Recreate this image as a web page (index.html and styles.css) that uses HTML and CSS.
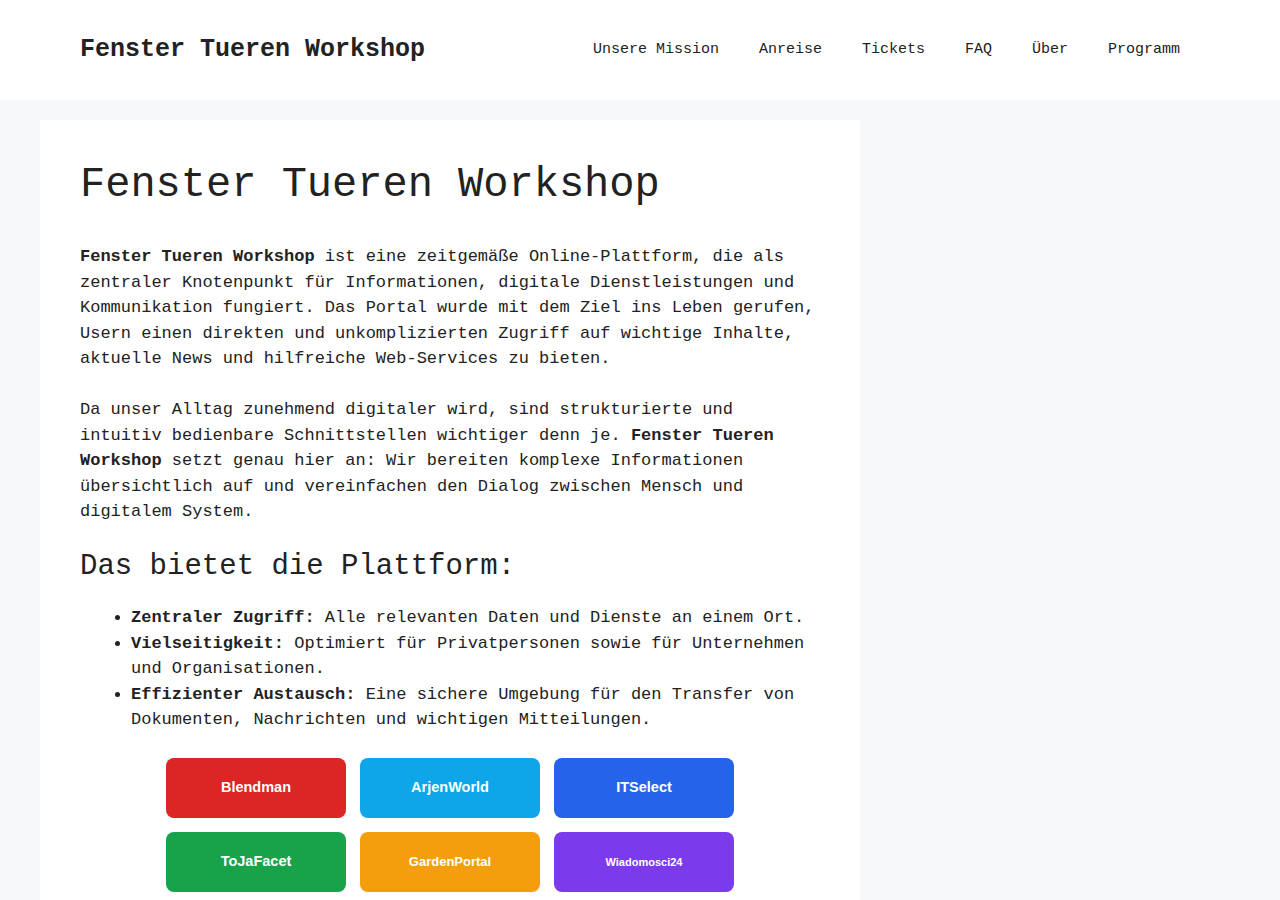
FILE: index.html
```html
<!DOCTYPE html>
<html lang="de">
<head>
<meta charset="utf-8">
<title>Fenster Tueren Workshop</title>
<link rel="stylesheet" href="styles.css">
</head>
<body>
<header class="site-header">
  <div class="header-inner">
    <a class="site-title" href="#">Fenster Tueren Workshop</a>
    <nav class="main-nav">
      <a href="#">Unsere Mission</a>
      <a href="#">Anreise</a>
      <a href="#">Tickets</a>
      <a href="#">FAQ</a>
      <a href="#">Über</a>
      <a href="#">Programm</a>
    </nav>
  </div>
</header>
<div class="site-content">
  <main class="content-area">
    <article class="entry">
      <h1 class="entry-title">Fenster Tueren Workshop</h1>
      <p><strong>Fenster Tueren Workshop</strong> ist eine zeitgemäße Online-Plattform, die als zentraler Knotenpunkt für Informationen, digitale Dienstleistungen und Kommunikation fungiert. Das Portal wurde mit dem Ziel ins Leben gerufen, Usern einen direkten und unkomplizierten Zugriff auf wichtige Inhalte, aktuelle News und hilfreiche Web-Services zu bieten.</p>
      <p>Da unser Alltag zunehmend digitaler wird, sind strukturierte und intuitiv bedienbare Schnittstellen wichtiger denn je. <strong>Fenster Tueren Workshop</strong> setzt genau hier an: Wir bereiten komplexe Informationen übersichtlich auf und vereinfachen den Dialog zwischen Mensch und digitalem System.</p>
      <h2>Das bietet die Plattform:</h2>
      <ul>
        <li><strong>Zentraler Zugriff:</strong> Alle relevanten Daten und Dienste an einem Ort.</li>
        <li><strong>Vielseitigkeit:</strong> Optimiert für Privatpersonen sowie für Unternehmen und Organisationen.</li>
        <li><strong>Effizienter Austausch:</strong> Eine sichere Umgebung für den Transfer von Dokumenten, Nachrichten und wichtigen Mitteilungen.</li>
      </ul>
      <div class="partner-grid">
        <a class="partner red" href="#">Blendman</a>
        <a class="partner sky" href="#">ArjenWorld</a>
        <a class="partner blue" href="#">ITSelect</a>
        <a class="partner green" href="#">ToJaFacet</a>
        <a class="partner amber medium" href="#">GardenPortal</a>
        <a class="partner purple small" href="#">Wiadomosci24</a>
      </div>
    </article>
  </main>
</div>
</body>
</html>
```

FILE: styles.css
```css
* {
  box-sizing: border-box;
}

html, body {
  margin: 0;
  padding: 0;
}

body {
  background: #f7f8f9;
  color: #222222;
  font-family: "Liberation Mono", "DejaVu Sans Mono", monospace;
  font-size: 17px;
  line-height: 1.5;
}

a {
  text-decoration: none;
  color: inherit;
}

.site-header {
  background: #ffffff;
}

.header-inner {
  height: 100px;
  padding: 20px 80px 20px 80px;
  display: flex;
  align-items: center;
  justify-content: space-between;
}

.site-title {
  font-size: 25px;
  font-weight: 700;
  line-height: 1.5;
  color: #222222;
}

.main-nav {
  display: flex;
}

.main-nav a {
  padding: 0 20px;
  line-height: 60px;
  font-size: 15px;
  color: #222222;
}

.site-content {
  padding: 20px 40px 0 40px;
  display: flex;
}

.content-area {
  width: 820px;
  background: #ffffff;
  padding: 40px;
}

.entry-title {
  font-size: 42px;
  font-weight: 400;
  line-height: 1.2;
  margin: 0 0 34px 0;
}

p {
  margin: 0 0 25.5px 0;
}

h2 {
  font-size: 29px;
  font-weight: 400;
  line-height: 1.2;
  margin: 0 0 20px 0;
}

ul {
  margin: 0 0 25.5px 51px;
  padding: 0;
}

.partner-grid {
  display: grid;
  grid-template-columns: repeat(3, 180px);
  gap: 14px;
  justify-content: center;
}

.partner {
  height: 60px;
  border-radius: 8px;
  display: flex;
  align-items: center;
  justify-content: center;
  color: #ffffff;
  font-family: "Liberation Sans", Arial, sans-serif;
  font-weight: 700;
  font-size: 14.5px;
}

.partner.medium {
  font-size: 13px;
}

.partner.small {
  font-size: 11px;
}

.red { background: #dc2626; }
.sky { background: #0ea5e9; }
.blue { background: #2563eb; }
.green { background: #16a34a; }
.amber { background: #f59e0b; }
.purple { background: #7c3aed; }
```
